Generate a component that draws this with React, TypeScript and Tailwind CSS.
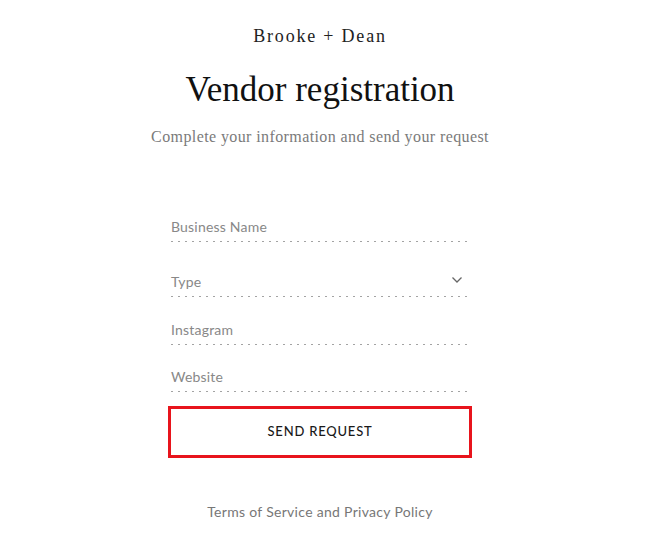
import React from "react";

const dots =
  "h-px w-full bg-[linear-gradient(to_right,#a3a3a3_2px,transparent_2px)] bg-[length:7px_1px] bg-repeat-x";

function Field({ label, chevron, className }: { label: string; chevron?: boolean; className?: string }) {
  return (
    <div className={className}>
      <div className="flex items-center justify-between pb-1">
        <span className="h-5 leading-5 text-[14px] tracking-[0.2px] text-[#888]">{label}</span>
        {chevron && (
          <svg width="12" height="8" viewBox="0 0 12 8" className="mr-[6px] -mt-1">
            <path d="M1.5 1.5 L6 6 L10.5 1.5" fill="none" stroke="#666" strokeWidth="1.3" />
          </svg>
        )}
      </div>
      <div className={dots} />
    </div>
  );
}

export default function App() {
  return (
    <div className="min-h-[559px] w-[670px] bg-white">
      <div className="flex w-[640px] flex-col items-center pt-6" style={{ fontFamily: "Lato, sans-serif" }}>
        <div className="h-6 leading-6 text-[18px] tracking-[1.8px] text-[#222]" style={{ fontFamily: "'Liberation Serif', serif" }}>
          Brooke + Dean
        </div>
        <h1 className="mt-5 h-11 leading-[44px] text-[35px] text-[#111]" style={{ fontFamily: "'Liberation Serif', serif" }}>
          Vendor registration
        </h1>
        <p className="mt-[13px] h-6 leading-6 text-[16px] tracking-[0.4px] text-[#7a7a7a]" style={{ fontFamily: "'Liberation Serif', serif" }}>
          Complete your information and send your request
        </p>
        <div className="mt-[68px] flex w-[298px] flex-col">
          <Field label="Business Name" />
          <Field label="Type" chevron className="mt-[30px]" />
          <Field label="Instagram" className="mt-[23px]" />
          <Field label="Website" className="mt-[22px]" />
        </div>
        <button className="mt-[14px] flex h-[52px] w-[304px] items-center justify-center border-[3px] border-[#e8141c] bg-white text-[13px] font-medium tracking-[0.8px] text-[#1a1a1a]">
          SEND REQUEST
        </button>
        <div className="mt-11 h-5 leading-5 text-[14px] tracking-[0.3px] text-[#777]">
          Terms of Service and Privacy Policy
        </div>
      </div>
    </div>
  );
}
